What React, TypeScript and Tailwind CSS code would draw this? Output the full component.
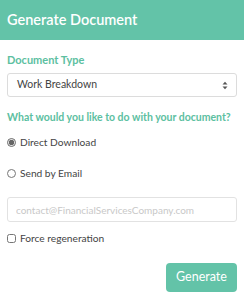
import React, { useState } from 'react';

export default function App() {
  const [mode, setMode] = useState<'download' | 'email'>('download');

  return (
    <div className="w-[244px] h-[300px] bg-white font-['Lato','Noto_Sans',sans-serif] text-[#333]">
      <div className="h-[40px] bg-[#63c3a8] flex items-center px-[7px]">
        <h1 className="text-white text-[14.5px] font-semibold leading-none">Generate Document</h1>
      </div>

      <div className="px-[7px] pt-[12px]">
        <label className="block h-[16px] text-[11px] font-bold text-[#5cc0a1] leading-[16px]">Document Type</label>
        <div className="mt-[5px] h-[24px] border border-[#dcdcdc] rounded-[3px] flex items-center justify-between pl-[9px] pr-[8px]">
          <span className="text-[10.5px] text-[#444]">Work Breakdown</span>
          <svg width="6" height="9" viewBox="0 0 6 9" className="text-[#555]">
            <path d="M0.5 3.5 L3 0.8 L5.5 3.5 Z" fill="currentColor" />
            <path d="M0.5 5.5 L3 8.2 L5.5 5.5 Z" fill="currentColor" />
          </svg>
        </div>

        <p className="mt-[12px] h-[16px] text-[10.5px] font-bold text-[#5cc0a1] leading-[16px] whitespace-nowrap">
          What would you like to do with your document?
        </p>

        <label className="mt-[9px] h-[16px] flex items-center gap-[4px] text-[10.2px] text-[#444] leading-[16px]">
          <input
            type="radio"
            checked={mode === 'download'}
            onChange={() => setMode('download')}
            className="w-[9px] h-[9px] m-0 accent-[#666]"
          />
          Direct Download
        </label>

        <label className="mt-[15px] h-[16px] flex items-center gap-[4px] text-[10.2px] text-[#444] leading-[16px]">
          <input
            type="radio"
            checked={mode === 'email'}
            onChange={() => setMode('email')}
            className="w-[9px] h-[9px] m-0"
          />
          Send by Email
        </label>

        <input
          type="text"
          placeholder="contact@FinancialServicesCompany.com"
          className="block mt-[16px] w-full h-[25px] border border-[#e2e2e2] rounded-[3px] px-[8px] text-[10px] placeholder:text-[#c8c8c8] outline-none"
        />

        <label className="mt-[8px] h-[16px] flex items-center gap-[4px] text-[10.2px] text-[#444] leading-[16px]">
          <input type="checkbox" className="w-[9px] h-[9px] m-0" />
          Force regeneration
        </label>

        <div className="mt-[17px] flex justify-end">
          <button className="w-[71px] h-[29px] bg-[#63c3a8] rounded-[4px] text-white text-[12.5px]">Generate</button>
        </div>
      </div>
    </div>
  );
}
